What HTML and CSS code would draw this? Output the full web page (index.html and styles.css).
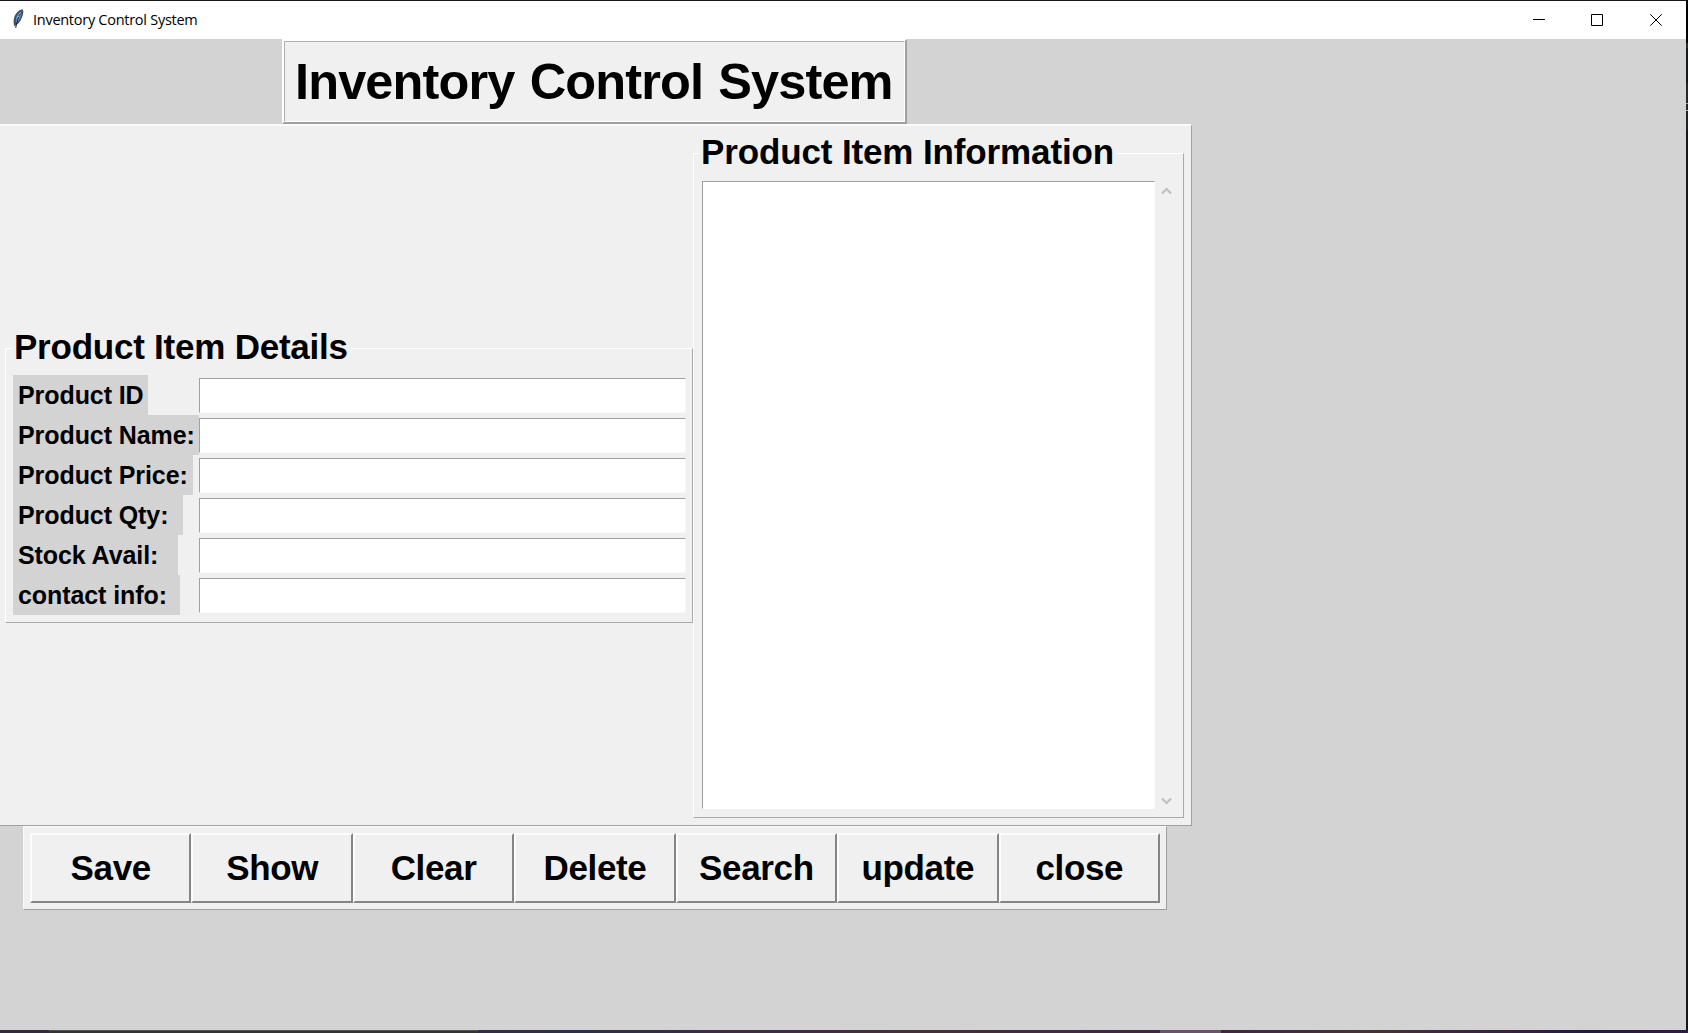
FILE: index.html
```html
<!DOCTYPE html>
<html lang="en">
<head>
<meta charset="utf-8">
<title>Inventory Control System</title>
<link rel="stylesheet" href="styles.css">
</head>
<body>
<div class="desktop">
  <div class="window">
    <header class="titlebar">
      <svg class="feather" width="13" height="20" viewBox="0 0 13 20">
        <path d="M2.500 17.500C.5 12 2 6 6 2.500C8 .6 10.500 .3 11 .8C12 4 10.500 8 8.500 11.500C7 14 5 16 3.800 16.200Z" fill="#46505c"/>
        <path d="M3.800 13C3.500 9 5 5 9.500 2C10 6 8 10 5 13.500Z" fill="#5b93d6"/>
        <path d="M9.500 3Q5.500 8 3.700 19" fill="none" stroke="#23292f" stroke-width="1"/>
        <path d="M7 5L9 3.500M5.200 8L7.500 7" stroke="#a9c8e8" stroke-width=".8"/>
      </svg>
      <span class="caption">Inventory Control System</span>
      <nav class="controls">
        <svg width="12" height="12" viewBox="0 0 12 12"><path d="M0 5.500H12"/></svg>
        <svg width="12" height="12" viewBox="0 0 12 12"><path d="M.5 .5H11.500V11.500H.5Z"/></svg>
        <svg width="12" height="12" viewBox="0 0 12 12"><path d="M.3 .3L11.700 11.700M11.700 .3L.3 11.700"/></svg>
      </nav>
    </header>
    <h1 class="heading"><span>Inventory Control System</span></h1>
    <main class="panel">
      <fieldset class="group details">
        <legend>Product Item Details</legend>
        <div class="row"><label class="w-id">Product ID</label><input></div>
        <div class="row"><label class="w-name">Product Name:</label><input></div>
        <div class="row"><label class="w-price">Product Price:</label><input></div>
        <div class="row"><label class="w-qty">Product Qty:</label><input></div>
        <div class="row"><label class="w-stock">Stock Avail:</label><input></div>
        <div class="row"><label class="w-contact">contact info:</label><input></div>
      </fieldset>
      <fieldset class="group info">
        <legend>Product Item Information</legend>
        <div class="listing">
          <div class="listbox"></div>
          <div class="scrollbar">
            <svg width="11" height="8" viewBox="0 0 11 8"><path d="M1 6.500L5.500 2L10 6.500"/></svg>
            <svg width="11" height="8" viewBox="0 0 11 8"><path d="M1 1.500L5.500 6L10 1.500"/></svg>
          </div>
        </div>
      </fieldset>
    </main>
    <div class="actions">
      <button>Save</button><button>Show</button><button>Clear</button><button>Delete</button><button>Search</button><button>update</button><button>close</button>
    </div>
  </div>
  <div class="edge"></div>
  <footer class="taskbar"><i class="t1"></i><i class="t2"></i><i class="t3"></i><i class="t4"></i><i class="t5"></i></footer>
</div>
</body>
</html>
```
FILE: styles.css
```css
* { box-sizing: border-box; }
body { margin: 0; overflow: hidden; font-family: "Liberation Sans", Arial, sans-serif; color: #000; }
.desktop { width: 1688px; height: 1033px; display: grid; grid-template: 1030px 3px / 1686px 2px; background: #d3d3d3; }
.window { border-top: 1px solid #17151a; display: flex; flex-direction: column; align-items: flex-start; min-width: 0; }
.edge { background: linear-gradient(#000 0 43px, #2a2b2e 43px 48px, #17191b 48px 83px, #25272a 83px 103px, #999 103px 104px, #25272a 104px 110px, #aaa 110px 111px, #202225 111px 130px, #14181c 130px); }

.titlebar { width: 100%; height: 38px; background: #fff; display: flex; align-items: center; padding: 0 24px 0 12px; }
.feather { flex: none; margin-top: -2px; }
.caption { font: 14.500px/20px "Open Sans", sans-serif; letter-spacing: -0.270px; margin-left: 8px; white-space: nowrap; }
.controls { margin-left: auto; display: flex; gap: 47px 46px; }
.controls svg { fill: none; stroke: #000; stroke-width: 1; }
.controls svg:nth-child(2) { margin-right: 1px; }

.heading { margin: 0 0 0 282px; width: 625px; height: 85px; background: #f0f0f0; border: 2px solid; border-color: #fff #a0a0a0 #a0a0a0 #fff; }
.heading span { display: block; height: 81px; border: 1px solid; border-color: #b0b0b0 #fff #fff #b0b0b0; padding-left: 10px; font-size: 50.500px; line-height: 79px; letter-spacing: -0.870px; word-spacing: 2px; white-space: nowrap; }

.panel { width: 1192px; height: 702px; background: #f0f0f0; border: solid; border-width: 2px 1px 1px 0; border-color: #fafafa #a0a0a0 #a0a0a0; display: flex; padding: 0 7px 7px 5px; }
.group { margin: 0; min-width: 0; border: 1px solid; border-color: #fff #aaa #aaa #fff; }
.group legend { font-weight: bold; font-size: 35px; line-height: 40px; height: 42px; letter-spacing: -0.130px; white-space: nowrap; }
.details { width: 688px; margin-top: 201px; height: 296px; padding: 6px 6px 6px 7px; }
.details legend { margin-left: -1px; padding: 0 3px 0 2px; letter-spacing: -0.230px; }
.row { display: flex; height: 40px; align-items: flex-start; }
.row label { height: 40px; background: #d3d3d3; padding-left: 5px; font-weight: bold; font-size: 25px; line-height: 41px; letter-spacing: -0.080px; white-space: nowrap; flex: none; }
.w-id { width: 135px; margin-right: 51px; }
.w-name { width: 186px; }
.w-price { width: 180px; margin-right: 6px; }
.w-qty { width: 170px; margin-right: 16px; }
.w-stock { width: 165px; margin-right: 21px; }
.w-contact { width: 167px; margin-right: 19px; }
.row input { flex: 1; min-width: 0; height: 35px; margin: 3px 0 0; padding: 0 4px; background: #fff; border: 1px solid; border-color: #a0a0a0 #f8f8f8 #f8f8f8 #a0a0a0; font: 24px "Liberation Sans", sans-serif; outline: 0; }

.info { width: 491px; margin-top: 6px; padding: 7px 8px; }
.info legend { margin-left: -3px; padding: 0 3px 0 2px; }
.listing { display: flex; height: 628px; }
.listbox { width: 453px; background: #fff; border: 1px solid; border-color: #a0a0a0 #fff #fff #a0a0a0; }
.scrollbar { flex: 1; display: flex; flex-direction: column; justify-content: space-between; padding: 6px 0 4px 6px; }
.scrollbar svg { fill: none; stroke: #c0c0c0; stroke-width: 2.200; }

.actions { margin-left: 23px; width: 1144px; height: 84px; background: #f0f0f0; border: 1px solid; border-color: #fafafa #a0a0a0 #a0a0a0 #fafafa; padding: 6px; display: grid; grid-template-columns: repeat(7, 1fr); }
.actions button { margin: 0; padding: 0; background: #f0f0f0; border: 2px solid; border-color: #fcfcfc #858585 #858585 #fcfcfc; font: bold 35px/60px "Liberation Sans", sans-serif; letter-spacing: -0.350px; color: #000; }

.taskbar { grid-column: 1 / 3; display: flex; }
.t1 { width: 49px; background: #352841; }
.t2 { width: 429px; background: #333; border-top: 1px solid #555; }
.t3 { width: 682px; background: linear-gradient(90deg, #332b4a, #2b2f4a 15%, #402a45 40%, #4a2c38 65%, #432444); }
.t4 { width: 61px; background: #6c5268; }
.t5 { flex: 1; background: linear-gradient(90deg, #432444, #4a3035 33%, #41233f 50%, #24194a 78%, #321a48); }
```
